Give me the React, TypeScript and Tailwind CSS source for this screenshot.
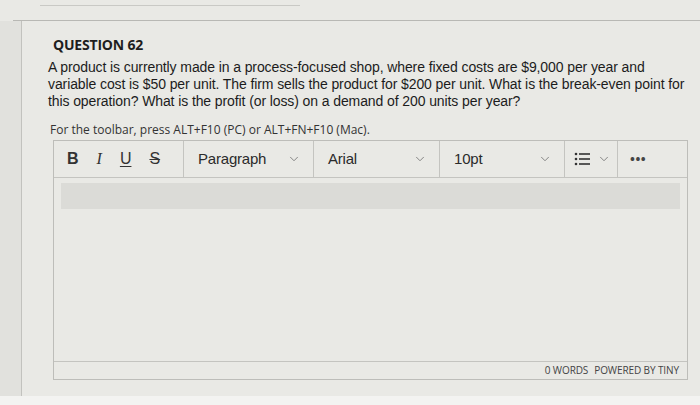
import { ChevronDown } from "lucide-react";

const sans = { fontFamily: '"Liberation Sans", Arial, sans-serif' };

function Dropdown({ label, width }: { label: string; width: string }) {
  return (
    <div className={`flex items-center justify-between border-r border-[#c4c4c0] pl-[14px] pr-[12px] ${width}`}>
      <span className="text-[15px] tracking-[-0.2px] text-[#2b2b2b]" style={sans}>
        {label}
      </span>
      <ChevronDown className="h-[14px] w-[14px] text-[#777]" strokeWidth={1.5} />
    </div>
  );
}

function ListIcon() {
  return (
    <svg width="16" height="14" viewBox="0 0 16 14" className="text-[#333]">
      <circle cx="2" cy="2" r="1.3" fill="currentColor" />
      <circle cx="2" cy="7" r="1.3" fill="currentColor" />
      <circle cx="2" cy="12" r="1.3" fill="currentColor" />
      <rect x="5" y="1.2" width="11" height="1.6" fill="currentColor" />
      <rect x="5" y="6.2" width="11" height="1.6" fill="currentColor" />
      <rect x="5" y="11.2" width="11" height="1.6" fill="currentColor" />
    </svg>
  );
}

export default function App() {
  return (
    <div
      className="relative h-[405px] w-[700px] overflow-hidden bg-[#e9e9e5] text-[#222]"
      style={{ fontFamily: '"Open Sans", "Noto Sans", sans-serif' }}
    >
      {/* top rules */}
      <div className="ml-[40px] mt-[5px] w-[260px] border-t border-[#c9c9c5]" />
      <div className="ml-[13px] mt-[14px] border-t border-[#b8b8b4]" />

      <div className="flex h-[387px]">
        {/* left frame */}
        <div className="w-[22px] shrink-0 border-r border-[#c2c2be] bg-[#e1e1dd]" />

        <div className="flex-1 pl-[31px] pr-[13px]">
          <h2 className="mt-[16px] text-[14px] font-bold leading-[16px] tracking-[-0.2px] text-[#1e1e1e]">
            QUESTION 62
          </h2>

          <p
            className="mt-[6px] -ml-[5px] w-[640px] text-[14px] leading-[17px] tracking-[-0.1px] text-[#1c1c1c]"
            style={sans}
          >
            A product is currently made in a process-focused shop, where fixed costs are $9,000 per year and
            variable cost is $50 per unit. The firm sells the product for $200 per unit. What is the break-even
            point for this operation? What is the profit (or loss) on a demand of 200 units per year?
          </p>

          <div className="mt-[12px] -ml-[3px] text-[12px] leading-[15px] text-[#333]">
            For the toolbar, press ALT+F10 (PC) or ALT+FN+F10 (Mac).
          </div>

          <div className="mt-[3px] flex h-[240px] flex-col border border-[#bdbdb9]">
            {/* toolbar */}
            <div className="flex h-[37px] shrink-0 border-b border-[#c4c4c0]">
              <div className="flex w-[130px] items-center gap-[18px] border-r border-[#c4c4c0] pl-[13px] text-[16px] text-[#333]">
                <span className="font-bold" style={sans}>B</span>
                <span className="italic" style={{ fontFamily: '"Liberation Serif", serif' }}>I</span>
                <span className="underline decoration-1 underline-offset-2" style={sans}>U</span>
                <span className="line-through decoration-1" style={sans}>S</span>
              </div>
              <Dropdown label="Paragraph" width="w-[130px]" />
              <Dropdown label="Arial" width="w-[126px]" />
              <Dropdown label="10pt" width="w-[125px]" />
              <div className="flex w-[53px] items-center gap-[7px] border-r border-[#c4c4c0] pl-[9px]">
                <ListIcon />
                <ChevronDown className="h-[14px] w-[14px] text-[#777]" strokeWidth={1.5} />
              </div>
              <div className="flex flex-1 items-center pl-[12px] text-[13px] font-bold leading-none tracking-[0.5px] text-[#444]">
                •••
              </div>
            </div>

            {/* edit area */}
            <div className="flex-1 px-[7px] pt-[5px]">
              <div className="h-[26px] bg-[#dbdbd7]" />
            </div>

            {/* status bar */}
            <div className="flex h-[18px] shrink-0 items-center justify-end border-t border-[#c4c4c0] pr-[8px] text-[10px] tracking-[-0.1px] text-[#444]">
              <span>0 WORDS</span>
              <span className="ml-[6px]">POWERED BY TINY</span>
            </div>
          </div>
        </div>
      </div>

      {/* bottom edge */}
      <div className="absolute bottom-0 left-0 h-[9px] w-full bg-[#f3f3f1]" />
    </div>
  );
}
